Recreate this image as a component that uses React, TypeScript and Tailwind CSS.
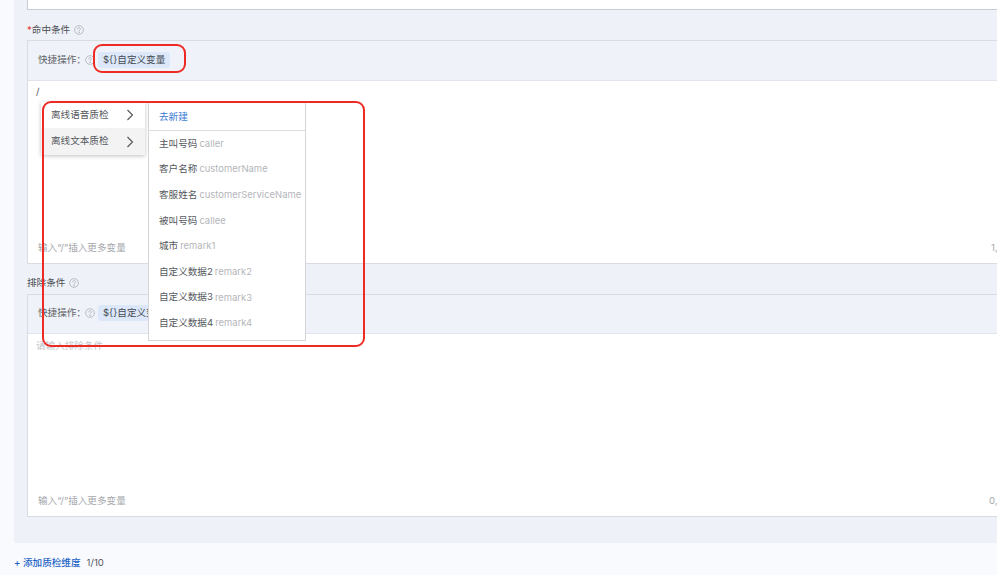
const FONT = "font-['Inter','Noto_Sans_CJK_SC',sans-serif]";

const variables = [
    { name: "主叫号码", key: "caller" },
    { name: "客户名称", key: "customerName" },
    { name: "客服姓名", key: "customerServiceName" },
    { name: "被叫号码", key: "callee" },
    { name: "城市", key: "remark1" },
    { name: "自定义数据2", key: "remark2" },
    { name: "自定义数据3", key: "remark3" },
    { name: "自定义数据4", key: "remark4" },
];

function HelpIcon() {
    return (
        <svg className="w-[10px] h-[10px] shrink-0 text-[#a3a8b0]" viewBox="0 0 16 16" fill="none" stroke="currentColor" strokeWidth="1.1">
            <circle cx="8" cy="8" r="7" />
            <path d="M5.8 6.3a2.2 2.2 0 1 1 3.5 1.7c-.9.6-1.3 1-1.3 2" strokeLinecap="round" />
            <circle cx="8" cy="12.2" r=".5" fill="currentColor" />
        </svg>
    );
}

function Chevron() {
    return (
        <svg className="w-[8px] h-[12px] text-[#555]" viewBox="0 0 8 12" fill="none" stroke="currentColor" strokeWidth="1.1">
            <path d="M1.5 1l5 5-5 5" />
        </svg>
    );
}

function ConditionBox({ height, toolbar, count, countLeft, placeholder, value }: { height: string; toolbar: string; count: string; countLeft: string; placeholder?: string; value?: string }) {
    return (
        <div className={`w-[1000px] border border-[#d9dce3] bg-[#eff2f8] ${height} flex flex-col`}>
            <div className={`${toolbar} shrink-0 flex items-center pl-[10px] text-[#5f6368]`}>
                <span>快捷操作：</span>
                <span className="ml-[-1px]"><HelpIcon /></span>
                <span className="ml-[3px] h-[16px] px-[5px] rounded-[3px] bg-[#dce8fa] text-[#44484f] flex items-center">{"${}"}自定义变量</span>
            </div>
            <div className="flex-1 bg-white border-t border-[#e1e4ec] flex flex-col pl-[8px] pr-[4px]">
                <div className="h-[24px] pt-[3px] leading-[16px] text-[#555]">
                    {value}
                    {placeholder && <span className="relative top-[1px] text-[#c2c5ca]">{placeholder}</span>}
                </div>
                <div className="mt-auto pb-[8px] pl-[2px] leading-[14px] text-[#a5a8ad]">
                    输入“/”插入更多变量
                    <span className={`absolute ${countLeft}`}>{count}</span>
                </div>
            </div>
        </div>
    );
}

function FieldLabel({ text, required }: { text: string; required?: boolean }) {
    return (
        <div className="h-[14px] flex items-center gap-[4px] text-[#4a4d52]">
            <span>
                {required && <span className="text-[#e5352b]">*</span>}
                {text}
            </span>
            <HelpIcon />
        </div>
    );
}

export default function App() {
    return (
        <div className={`relative w-[997px] h-[575px] overflow-hidden bg-[#f9fafd] text-[9.6px] ${FONT}`}>
            <div className="ml-[14px] h-[543px] bg-[#eef1f7] pl-[13px] overflow-hidden">
                <div className="w-[1000px] h-[10px] bg-white border-l border-b border-[#c9ccd4]" />
                <div className="mt-[13px]">
                    <FieldLabel text="命中条件" required />
                </div>
                <div className="mt-[3px]">
                    <ConditionBox height="h-[224px]" toolbar="h-[39px] pb-[1px]" count="1," countLeft="left-[991px]" value="/" />
                </div>
                <div className="mt-[12px]">
                    <FieldLabel text="排除条件" />
                </div>
                <div className="mt-[4px]">
                    <ConditionBox height="h-[223px]" toolbar="h-[38px] pb-[2px]" count="0," countLeft="left-[989px]" placeholder="请输入排除条件" />
                </div>
            </div>
            <div className="h-[32px] pt-[8px] pl-[14px] flex items-center font-medium">
                <span className="text-[#1b63c6]">+ 添加质检维度</span>
                <span className="ml-[6px] font-normal text-[#55585d]">1/10</span>
            </div>

            {/* variable picker */}
            <div className="absolute left-[41px] top-[102px] w-[104px] h-[53px] bg-white shadow-[0_1px_4px_rgba(0,0,0,0.25)] text-[#55585d]">
                <div className="h-[26px] flex items-center justify-between pl-[10px] pr-[11px]">
                    <span>离线语音质检</span>
                    <Chevron />
                </div>
                <div className="h-[27px] flex items-center justify-between pl-[10px] pr-[11px] bg-[#f3f3f3]">
                    <span>离线文本质检</span>
                    <Chevron />
                </div>
            </div>
            <div className="absolute left-[148px] top-[102px] w-[158px] h-[239px] bg-white border border-[#d4d5d9] border-t-0">
                <div className="h-[29px] flex items-center pt-[2px] pl-[10px] border-b border-[#dcdde0] text-[#3d7bd4]">去新建</div>
                <div>
                    {variables.map((v) => (
                        <div key={v.key} className="h-[25.65px] flex items-center pl-[10px] whitespace-nowrap text-[#55585d]">
                            {v.name}
                            <span className="ml-[2px] text-[9.45px] text-[#b4b6ba]">{v.key}</span>
                        </div>
                    ))}
                </div>
            </div>

            {/* annotation marks */}
            <div className="absolute left-[93px] top-[44px] w-[93px] h-[29px] border-2 border-[#ee2a24] rounded-[9px]" />
            <div className="absolute left-[42px] top-[101px] w-[323px] h-[246px] border-2 border-[#ee2a24] rounded-[9px]" />
        </div>
    );
}
